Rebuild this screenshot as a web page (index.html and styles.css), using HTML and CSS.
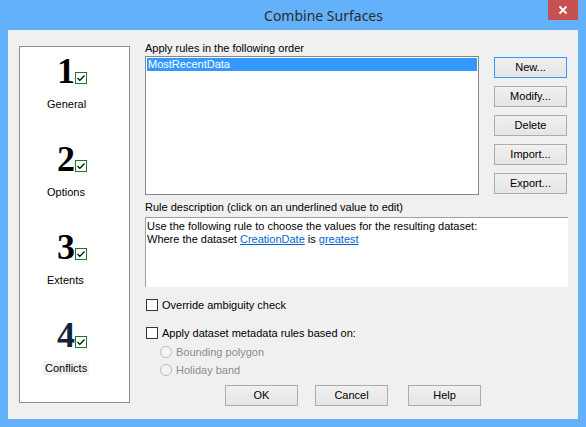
FILE: index.html
```html
<!DOCTYPE html>
<html>
<head>
<meta charset="utf-8">
<link rel="stylesheet" href="styles.css">
</head>
<body>
<div class="window">
  <div class="titlebar">
    <div class="title">Combine Surfaces</div>
    <div class="close"><svg width="10" height="10" viewBox="0 0 10 10"><path d="M1.5 1.5 L8.5 8.5 M8.5 1.5 L1.5 8.5" stroke="#fff" stroke-width="1.8" fill="none"/></svg></div>
  </div>
  <div class="client">
    <div class="steps">
      <div class="step">
        <div class="num-row"><span class="digit">1</span><svg class="tick" width="12" height="12" viewBox="0 0 12 12"><rect x="0.5" y="0.5" width="11" height="11" fill="#fff" stroke="#1d7a1d"/><path d="M2.5 6 L4.8 8.3 L9.5 3.5" stroke="#000" stroke-width="1.2" fill="none"/></svg></div>
        <div class="step-label">General</div>
      </div>
      <div class="step">
        <div class="num-row"><span class="digit">2</span><svg class="tick" width="12" height="12" viewBox="0 0 12 12"><rect x="0.5" y="0.5" width="11" height="11" fill="#fff" stroke="#1d7a1d"/><path d="M2.5 6 L4.8 8.3 L9.5 3.5" stroke="#000" stroke-width="1.2" fill="none"/></svg></div>
        <div class="step-label">Options</div>
      </div>
      <div class="step">
        <div class="num-row"><span class="digit">3</span><svg class="tick" width="12" height="12" viewBox="0 0 12 12"><rect x="0.5" y="0.5" width="11" height="11" fill="#fff" stroke="#1d7a1d"/><path d="M2.5 6 L4.8 8.3 L9.5 3.5" stroke="#000" stroke-width="1.2" fill="none"/></svg></div>
        <div class="step-label">Extents</div>
      </div>
      <div class="step">
        <div class="num-row"><span class="digit digit-four">4</span><svg class="tick" width="12" height="12" viewBox="0 0 12 12"><rect x="0.5" y="0.5" width="11" height="11" fill="#fff" stroke="#1d7a1d"/><path d="M2.5 6 L4.8 8.3 L9.5 3.5" stroke="#000" stroke-width="1.2" fill="none"/></svg></div>
        <div class="step-label current">Conflicts</div>
      </div>
    </div>
    <div class="main">
      <div class="top-row">
        <div class="list-col">
          <div class="label">Apply rules in the following order</div>
          <div class="listbox"><div class="item selected">MostRecentData</div></div>
        </div>
        <div class="btn-col">
          <div class="btn default">New...</div>
          <div class="btn">Modify...</div>
          <div class="btn">Delete</div>
          <div class="btn">Import...</div>
          <div class="btn">Export...</div>
        </div>
      </div>
      <div class="label desc-label">Rule description (click on an underlined value to edit)</div>
      <div class="desc">Use the following rule to choose the values for the resulting dataset:<br>Where the dataset <span class="link">CreationDate</span> is <span class="link">greatest</span></div>
      <div class="check check-first"><span class="box"></span><span>Override ambiguity check</span></div>
      <div class="check check-second"><span class="box"></span><span>Apply dataset metadata rules based on:</span></div>
      <div class="radio radio-first"><span class="circle"></span><span>Bounding polygon</span></div>
      <div class="radio radio-second"><span class="circle"></span><span>Holiday band</span></div>
      <div class="footer">
        <div class="btn">OK</div>
        <div class="btn">Cancel</div>
        <div class="btn help">Help</div>
      </div>
    </div>
  </div>
</div>
</body>
</html>
```
FILE: styles.css
```css
html, body {
  margin: 0;
  padding: 0;
}
body {
  width: 586px;
  height: 427px;
  overflow: hidden;
  font-family: "Liberation Sans", Arial, sans-serif;
  font-size: 11px;
  color: #000;
}
.window {
  width: 586px;
  height: 427px;
  box-sizing: border-box;
  background: #62b1fa;
  display: flex;
  flex-direction: column;
}
.titlebar {
  height: 30px;
  display: flex;
  align-items: flex-start;
}
.title {
  flex: 1;
  text-align: center;
  padding-left: 99px;
  font-family: "Noto Sans", "Open Sans", sans-serif;
  font-size: 14px;
  line-height: 30px;
  color: #2b2b2b;
  padding-top: 1px;
}
.close {
  width: 30px;
  height: 20px;
  margin-right: 8px;
  background: #c75050;
  display: flex;
  align-items: center;
  justify-content: center;
}
.client {
  margin: 0 8px;
  height: 389px;
  background: #f0f0f0;
  display: flex;
  align-items: flex-start;
  padding: 10px 0 0 11px;
  box-sizing: border-box;
}
.steps {
  margin-top: 6px;
  width: 111px;
  height: 357px;
  box-sizing: border-box;
  border: 1px solid #8e8f8f;
  background: #fff;
  padding-top: 6px;
}
.step {
  height: 88px;
}
.num-row {
  display: flex;
  align-items: flex-end;
  height: 36px;
}
.digit {
  width: 55px;
  text-align: right;
  font-family: "Liberation Serif", "Times New Roman", serif;
  font-weight: bold;
  font-size: 36px;
  line-height: 36px;
  color: #000;
}
.digit-four {
  color: #14233c;
}
.tick {
  display: block;
  margin-bottom: 5px;
  margin-left: 0;
}
.step-label {
  margin-top: 8px;
  margin-left: 27px;
  line-height: 14px;
  display: inline-block;
}
.step-label.current {
  margin-left: 23px;
  padding: 0 2px;
  background: #f0f0f0;
}
.main {
  margin-left: 15px;
  width: 423px;
}
.top-row {
  display: flex;
}
.list-col {
  width: 334px;
}
.label {
  line-height: 16px;
  height: 16px;
}
.listbox {
  height: 139px;
  box-sizing: border-box;
  border: 1px solid #828790;
  background: #fff;
  padding: 1px;
}
.item {
  height: 13px;
  line-height: 13px;
  padding-left: 1px;
}
.item.selected {
  background: #3399ff;
  color: #fff;
}
.btn-col {
  margin-left: 15px;
  padding-top: 17px;
  display: flex;
  flex-direction: column;
  gap: 8px;
}
.btn {
  width: 73px;
  height: 21px;
  box-sizing: border-box;
  border: 1px solid #acacac;
  background: linear-gradient(#f0f0f0, #e5e5e5);
  text-align: center;
  line-height: 19px;
}
.btn.default {
  border-color: #3399ff;
}
.desc-label {
  margin-top: 5px;
  line-height: 14px;
  height: 14px;
}
.desc {
  margin-top: 3px;
  height: 70px;
  box-sizing: border-box;
  background: #fff;
  border-top: 1px solid #a0a0a0;
  border-left: 1px solid #a0a0a0;
  padding: 2px 0 0 1px;
  line-height: 13px;
}
.link {
  color: #0066cc;
  text-decoration: underline;
}
.check {
  display: flex;
  align-items: center;
  height: 12px;
  line-height: 12px;
}
.check-first {
  margin-top: 12px;
}
.check-second {
  margin-top: 16px;
}
.box {
  width: 12px;
  height: 12px;
  box-sizing: border-box;
  border: 1px solid #333;
  background: #fff;
  margin-left: 1px;
  margin-right: 4px;
}
.radio {
  display: flex;
  align-items: center;
  height: 12px;
  line-height: 12px;
  padding-left: 15px;
  color: #8d8d8d;
}
.radio-first {
  margin-top: 7px;
}
.radio-second {
  margin-top: 6px;
}
.circle {
  width: 12px;
  height: 12px;
  box-sizing: border-box;
  border: 1px solid #bcbcbc;
  border-radius: 50%;
  background: #f4f4f4;
  margin-right: 4px;
}
.footer {
  margin-top: 9px;
  display: flex;
  padding-left: 80px;
  gap: 17px;
}
.footer .help {
  margin-left: 3px;
}
```
